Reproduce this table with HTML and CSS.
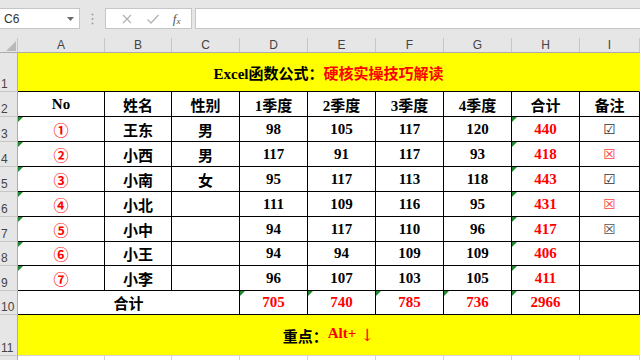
FILE: index.html
```html
<!DOCTYPE html>
<html lang="zh">
<head>
<meta charset="utf-8">
<title>Excel</title>
<link rel="stylesheet" href="styles.css">
</head>
<body>
<div class="toolbar">
  <div class="namebox"><span class="ref">C6</span><svg class="dd" width="7" height="4" viewBox="0 0 7 4"><path d="M0 0h7L3.5 4z" fill="#6a6a6a"/></svg></div>
  <svg class="dots" width="3" height="12" viewBox="0 0 3 12"><circle cx="1.5" cy="1.5" r="1" fill="#a0a0a0"/><circle cx="1.5" cy="6" r="1" fill="#a0a0a0"/><circle cx="1.5" cy="10.5" r="1" fill="#a0a0a0"/></svg>
  <div class="fbtns">
    <svg width="12" height="12" viewBox="0 0 12 12"><path d="M2 2l8 8M10 2l-8 8" stroke="#b4b4b4" stroke-width="1.3"/></svg>
    <svg width="14" height="12" viewBox="0 0 14 12"><path d="M1.5 6.5l3.5 3.5 7.5-8" stroke="#b4b4b4" stroke-width="1.3" fill="none"/></svg>
    <span class="fx">f<sub>x</sub></span>
  </div>
  <div class="finput"></div>
</div>
<div class="sheet">
  <div class="corner"><svg width="10" height="10" viewBox="0 0 10 10"><path d="M10 0v10H0z" fill="#b9b9b9"/></svg></div>
  <div class="ch">A</div><div class="ch">B</div><div class="ch">C</div><div class="ch">D</div><div class="ch">E</div><div class="ch">F</div><div class="ch">G</div><div class="ch">H</div><div class="ch">I</div>

  <div class="rh">1</div>
  <div class="c band title span9"><span>Excel函数公式：</span><span class="red">硬核实操技巧解读</span></div>

  <div class="rh">2</div>
  <div class="c t">No</div><div class="c t">姓名</div><div class="c t">性别</div><div class="c t">1季度</div><div class="c t">2季度</div><div class="c t">3季度</div><div class="c t">4季度</div><div class="c t">合计</div><div class="c t">备注</div>

  <div class="rh">3</div>
  <div class="c t tri circ">①</div><div class="c t">王东</div><div class="c t">男</div><div class="c t">98</div><div class="c t">105</div><div class="c t">117</div><div class="c t">120</div><div class="c t tri red">440</div><div class="c t box">☑</div>

  <div class="rh">4</div>
  <div class="c t tri circ">②</div><div class="c t">小西</div><div class="c t">男</div><div class="c t">117</div><div class="c t">91</div><div class="c t">117</div><div class="c t">93</div><div class="c t tri red">418</div><div class="c t box xr">☒</div>

  <div class="rh">5</div>
  <div class="c t tri circ">③</div><div class="c t">小南</div><div class="c t">女</div><div class="c t">95</div><div class="c t">117</div><div class="c t">113</div><div class="c t">118</div><div class="c t tri red">443</div><div class="c t box">☑</div>

  <div class="rh">6</div>
  <div class="c t tri circ">④</div><div class="c t">小北</div><div class="c t"></div><div class="c t">111</div><div class="c t">109</div><div class="c t">116</div><div class="c t">95</div><div class="c t tri red">431</div><div class="c t box xr">☒</div>

  <div class="rh">7</div>
  <div class="c t tri circ">⑤</div><div class="c t">小中</div><div class="c t"></div><div class="c t">94</div><div class="c t">117</div><div class="c t">110</div><div class="c t">96</div><div class="c t tri red">417</div><div class="c t box xk">☒</div>

  <div class="rh">8</div>
  <div class="c t tri circ">⑥</div><div class="c t">小王</div><div class="c t"></div><div class="c t">94</div><div class="c t">94</div><div class="c t">109</div><div class="c t">109</div><div class="c t tri red">406</div><div class="c t"></div>

  <div class="rh">9</div>
  <div class="c t tri circ">⑦</div><div class="c t">小李</div><div class="c t"></div><div class="c t">96</div><div class="c t">107</div><div class="c t">103</div><div class="c t">105</div><div class="c t tri red">411</div><div class="c t"></div>

  <div class="rh">10</div>
  <div class="c t span3">合计</div><div class="c t tri red">705</div><div class="c t tri red">740</div><div class="c t tri red">785</div><div class="c t tri red">736</div><div class="c t tri red">2966</div><div class="c t"></div>

  <div class="rh">11</div>
  <div class="c band span9"><span>重点：</span><span class="red">Alt+ <span class="arrow">↓</span></span></div>

  <div class="rh"></div>
  <div class="c"></div><div class="c"></div><div class="c"></div><div class="c"></div><div class="c"></div><div class="c"></div><div class="c"></div><div class="c"></div><div class="c"></div>
</div>
</body>
</html>
```
FILE: styles.css
```css
html, body {
  margin: 0;
  padding: 0;
  width: 640px;
  height: 360px;
  overflow: hidden;
  background: #ffffff;
}

.toolbar {
  height: 38px;
  box-sizing: border-box;
  background: #e6e6e6;
  display: flex;
  align-items: flex-start;
  padding-top: 8px;
  font-family: "Liberation Sans", Arial, sans-serif;
}

.namebox {
  width: 80px;
  height: 21px;
  box-sizing: border-box;
  background: #ffffff;
  border: 1px solid #c6c6c6;
  border-left: none;
  display: flex;
  align-items: center;
  justify-content: space-between;
  padding: 0 5px 0 4px;
  font-size: 12px;
  color: #333;
}

.dots {
  margin: 5px 0 0 11px;
}

.fbtns {
  margin-left: 11px;
  width: 87px;
  height: 21px;
  box-sizing: border-box;
  background: #ffffff;
  border: 1px solid #c6c6c6;
  display: flex;
  align-items: center;
  justify-content: space-around;
  padding: 0 4px 0 8px;
}

.fx {
  font-family: "Liberation Serif", serif;
  font-style: italic;
  font-size: 13px;
  color: #555;
  line-height: 1;
}
.fx sub {
  font-size: 9px;
  vertical-align: -1px;
}

.finput {
  margin-left: 3px;
  flex: 1;
  height: 21px;
  box-sizing: border-box;
  background: #ffffff;
  border: 1px solid #c6c6c6;
  border-right: none;
}

.sheet {
  display: grid;
  grid-template-columns: 18px 87px 67px repeat(6, 68px) 60px;
  grid-template-rows: 15px 39px 25px 25px 25px 25px 25px 25px 24px 25px 24px 41px 20px;
  font-family: "Liberation Serif", "Noto Sans CJK SC", serif;
  font-weight: bold;
  font-size: 15px;
  color: #000;
}

.corner {
  background: #e6e6e6;
  border-right: 1px solid #c6c6c6;
  border-bottom: 1px solid #ababab;
  box-sizing: border-box;
  display: flex;
  align-items: flex-end;
  justify-content: flex-end;
  padding: 0 1px 1px 0;
}

.ch {
  background: #e6e6e6;
  border-right: 1px solid #c6c6c6;
  border-bottom: 1px solid #ababab;
  box-sizing: border-box;
  display: flex;
  align-items: center;
  justify-content: center;
  font-family: "Liberation Sans", Arial, sans-serif;
  font-weight: normal;
  font-size: 12px;
  color: #444;
}

.rh {
  background: #e6e6e6;
  border-right: 1px solid #ababab;
  border-bottom: 1px solid #c6c6c6;
  box-sizing: border-box;
  display: flex;
  align-items: flex-end;
  padding: 0 0 0 1px;
  font-family: "Liberation Sans", Arial, sans-serif;
  font-weight: normal;
  font-size: 12px;
  line-height: 14px;
  color: #444;
}

.c {
  position: relative;
  box-sizing: border-box;
  border-right: 1px solid #d4d4d4;
  border-bottom: 1px solid #d4d4d4;
  display: flex;
  align-items: center;
  justify-content: center;
  white-space: nowrap;
}

.t {
  border-right-color: #000;
  border-bottom-color: #000;
}

.band {
  background: #ffff00;
  border-right-color: #ffff00;
}

.title {
  border-bottom-color: #000;
}

.span9 { grid-column: span 9; }
.span3 { grid-column: span 3; }

.red { color: #ff0000; }

.arrow {
  font-family: "DejaVu Serif", serif;
  font-weight: normal;
  font-size: 17px;
  vertical-align: -3px;
}

.circ {
  color: #ff0000;
  font-family: "Noto Sans CJK SC", sans-serif;
  font-weight: bold;
}

.box {
  font-family: "DejaVu Sans", sans-serif;
  font-weight: normal;
  font-size: 14px;
  color: #333;
}
.box.xr { color: #ff4040; }
.box.xk { color: #555; }

.tri::before {
  content: "";
  position: absolute;
  left: 0;
  top: 0;
  border-top: 5px solid #1e8a2e;
  border-right: 5px solid transparent;
}
```
